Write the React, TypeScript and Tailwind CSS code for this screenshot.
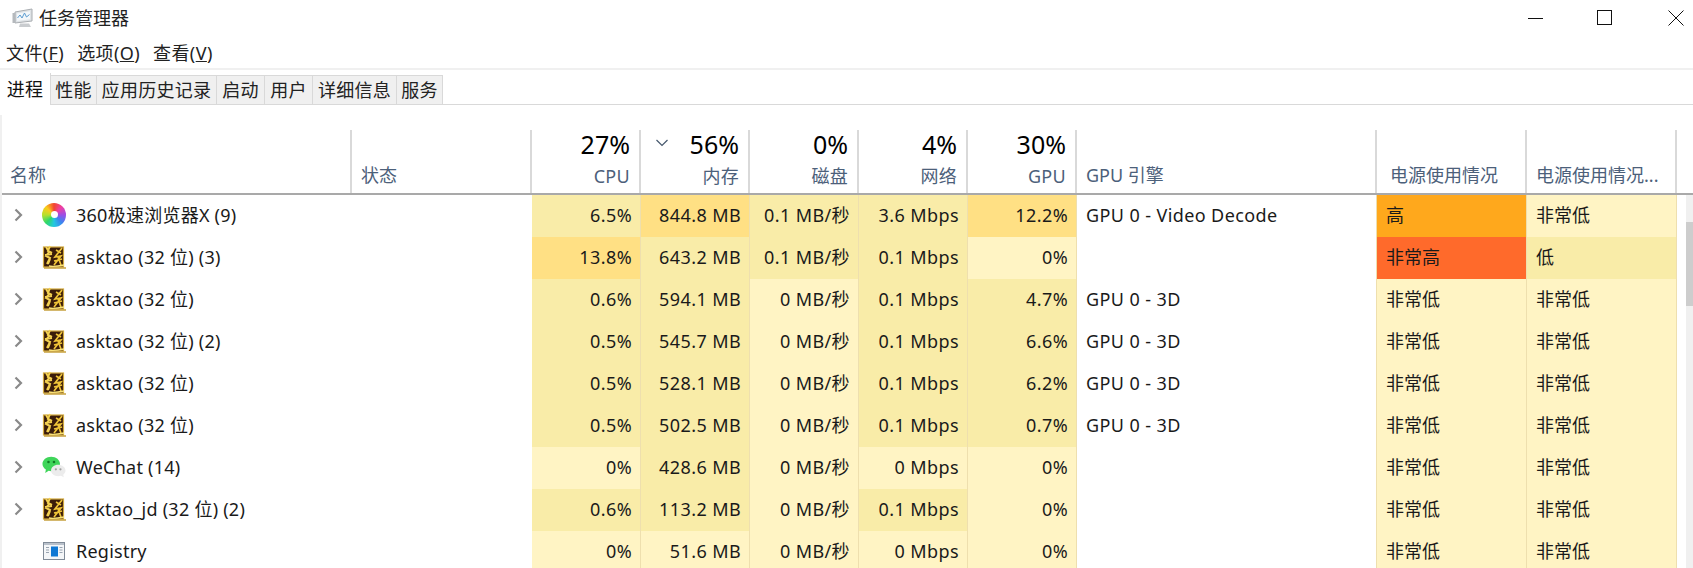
const FONT = "font-['Noto_Sans','Noto_Sans_CJK_SC',sans-serif]";

const L = "bg-[#fff4c4]";
const M = "bg-[#f9eca8]";
const S = "bg-[#ffe084]";
const H = "bg-[#ffa81c]";
const V = "bg-[#ff6a2b]";

type Cell = [string, string];
type Row = {
  icon: "360" | "tao" | "wechat" | "reg";
  name: string;
  arrow: boolean;
  cpu: Cell;
  mem: Cell;
  disk: Cell;
  net: Cell;
  gpu: Cell;
  engine: string;
  p1: Cell;
  p2: Cell;
};

const LOW = "非常低";

const rows: Row[] = [
  { icon: "360", name: "360极速浏览器X (9)", arrow: true, cpu: ["6.5%", M], mem: ["844.8 MB", S], disk: ["0.1 MB/秒", M], net: ["3.6 Mbps", M], gpu: ["12.2%", S], engine: "GPU 0 - Video Decode", p1: ["高", H], p2: [LOW, L] },
  { icon: "tao", name: "asktao (32 位) (3)", arrow: true, cpu: ["13.8%", S], mem: ["643.2 MB", M], disk: ["0.1 MB/秒", M], net: ["0.1 Mbps", M], gpu: ["0%", L], engine: "", p1: ["非常高", V], p2: ["低", M] },
  { icon: "tao", name: "asktao (32 位)", arrow: true, cpu: ["0.6%", M], mem: ["594.1 MB", M], disk: ["0 MB/秒", L], net: ["0.1 Mbps", M], gpu: ["4.7%", M], engine: "GPU 0 - 3D", p1: [LOW, L], p2: [LOW, L] },
  { icon: "tao", name: "asktao (32 位) (2)", arrow: true, cpu: ["0.5%", M], mem: ["545.7 MB", M], disk: ["0 MB/秒", L], net: ["0.1 Mbps", M], gpu: ["6.6%", M], engine: "GPU 0 - 3D", p1: [LOW, L], p2: [LOW, L] },
  { icon: "tao", name: "asktao (32 位)", arrow: true, cpu: ["0.5%", M], mem: ["528.1 MB", M], disk: ["0 MB/秒", L], net: ["0.1 Mbps", M], gpu: ["6.2%", M], engine: "GPU 0 - 3D", p1: [LOW, L], p2: [LOW, L] },
  { icon: "tao", name: "asktao (32 位)", arrow: true, cpu: ["0.5%", M], mem: ["502.5 MB", M], disk: ["0 MB/秒", L], net: ["0.1 Mbps", M], gpu: ["0.7%", M], engine: "GPU 0 - 3D", p1: [LOW, L], p2: [LOW, L] },
  { icon: "wechat", name: "WeChat (14)", arrow: true, cpu: ["0%", L], mem: ["428.6 MB", M], disk: ["0 MB/秒", L], net: ["0 Mbps", L], gpu: ["0%", L], engine: "", p1: [LOW, L], p2: [LOW, L] },
  { icon: "tao", name: "asktao_jd (32 位) (2)", arrow: true, cpu: ["0.6%", M], mem: ["113.2 MB", M], disk: ["0 MB/秒", L], net: ["0.1 Mbps", M], gpu: ["0%", L], engine: "", p1: [LOW, L], p2: [LOW, L] },
  { icon: "reg", name: "Registry", arrow: false, cpu: ["0%", L], mem: ["51.6 MB", L], disk: ["0 MB/秒", L], net: ["0 Mbps", L], gpu: ["0%", L], engine: "", p1: [LOW, L], p2: [LOW, L] },
];

function Icon({ kind }: { kind: Row["icon"] }) {
  if (kind === "360")
    return (
      <div className="relative w-[24px] h-[24px] rounded-full blur-[0.5px] bg-[conic-gradient(#f2452f,#ee3fa6,#9a4fe6,#3b86f0,#22c8e0,#2fd86a,#b6e02c,#fbcb1c,#f2452f)]">
        <div className="absolute left-[9px] top-[8px] w-[7px] h-[7px] rounded-full bg-white" />
      </div>
    );
  if (kind === "tao")
    return (
      <svg width="24" height="24" viewBox="0 0 24 24">
        <rect x="1.500" y="2" width="20" height="20" fill="#3a1c0a" stroke="#d2a93f" strokeWidth="1.200" />
        <path d="M2 23h22" stroke="#c29a30" strokeWidth="1.400" />
        <path d="M4 2l3 5-3 4 4 2-3 6M8 1L6 6l4 2M3 10l7-1M8 14l-2 5" stroke="#f3d050" strokeWidth="2" fill="none" />
        <path d="M20 3l-7 9 6-1-7 9M14 5l5 3M16 12l3 8M12 16l8-2" stroke="#f0c438" strokeWidth="1.700" fill="none" />
        <path d="M7 21c5 1 10 0 15-1" stroke="#f9e27a" strokeWidth="1.300" fill="none" />
      </svg>
    );
  if (kind === "wechat")
    return (
      <svg width="26" height="24" viewBox="0 0 26 24">
        <path d="M10 1c5.300 0 9.500 3.500 9.500 7.800S15.300 16.500 10 16.500c-1 0-2-.1-2.800-.4L3.500 18.500l.7-3.700C2 13.300.5 11.200.5 8.800.5 4.500 4.700 1 10 1z" fill="#3fd55a" />
        <path d="M17.500 9.500c4.300 0 8 2.800 8 6.300 0 1.800-1 3.400-2.500 4.500l.6 2.900-3.100-1.600c-.9.300-1.900.4-3 .4-4.300 0-7.700-2.700-7.700-6.200s3.400-6.300 7.700-6.300z" fill="#ececec" />
        <circle cx="7" cy="6.500" r="1.400" fill="#127a26" />
        <circle cx="13" cy="6.500" r="1.400" fill="#127a26" />
        <circle cx="15" cy="14.500" r="1.200" fill="#a2a2a2" />
        <circle cx="20" cy="14.500" r="1.200" fill="#a2a2a2" />
      </svg>
    );
  return (
    <svg width="24" height="24" viewBox="0 0 24 24">
      <rect x="1.500" y="3.500" width="21" height="17" fill="#f4f6f8" stroke="#808b98" />
      <rect x="2" y="4" width="20" height="2" fill="#b9c1cb" />
      <rect x="9" y="7.500" width="7" height="10" fill="#0f78d4" />
      <path d="M4 8.500h3M4 11h3M4 13.500h3M17.500 8.500h3M17.500 11h3M17.500 13.500h3" stroke="#98a3b0" />
    </svg>
  );
}

function HeaderStat({ w, pct, label, chevron }: { w: string; pct: string; label: string; chevron?: boolean }) {
  return (
    <div className={`${w} shrink-0 h-full relative flex flex-col items-end border-r-2 border-[#d9d9d9] pr-[9px]`}>
      {chevron && (
        <svg className="absolute left-[14px] top-[9px]" width="14" height="8" viewBox="0 0 14 8">
          <path d="M1.500 1l5.500 5.500L12.500 1" stroke="#46586d" strokeWidth="1.200" fill="none" />
        </svg>
      )}
      <div className="text-[25px] leading-[30px] text-black h-[30px] -mt-[1px]">{pct}</div>
      <div className="text-[18px] tracking-[0.3px] leading-[24px] mt-[5px] text-[#4c607a]">{label}</div>
    </div>
  );
}

function Num({ w, cell }: { w: string; cell: Cell }) {
  return (
    <div className={`${w} shrink-0 h-full ${cell[1]} border-r border-[#eedfae] flex items-center justify-end pr-[8px] pb-[2px] tracking-[0.4px]`}>
      {cell[0]}
    </div>
  );
}

function Txt({ w, cell }: { w: string; cell: Cell }) {
  return (
    <div className={`${w} shrink-0 h-full ${cell[1]} border-r border-[#eedfae] flex items-center pl-[9px] pb-[2px]`}>
      {cell[0]}
    </div>
  );
}

const headCls = "shrink-0 border-r-2 border-[#d9d9d9] flex items-end pb-[3px] text-[#4c607a] leading-[30px]";

const tabs: [string, string][] = [
  ["性能", "w-[46px]"],
  ["应用历史记录", "w-[120px]"],
  ["启动", "w-[48px]"],
  ["用户", "w-[48px]"],
  ["详细信息", "w-[84px]"],
  ["服务", "w-[46px]"],
];

export default function App() {
  return (
    <div className={`${FONT} w-[1693px] h-[568px] overflow-hidden bg-white text-[#1a1a1a] text-[18px] flex flex-col`}>
      {/* title bar */}
      <div className="h-[35px] shrink-0 flex items-center pl-[12px]">
        <svg width="22" height="22" viewBox="0 0 22 22">
          <path d="M3 5l17-3v12L3 16z" fill="#dfe3e6" stroke="#a9adb1" />
          <path d="M5 6.500l13-2.200v8L5 14z" fill="#f3f7fa" />
          <path d="M5.500 11l2.500-3 2 3 2.500-5 2 4 3-2.500" stroke="#5a9bd0" strokeWidth="1" fill="none" />
          <rect x="0.500" y="6" width="3" height="10" fill="#b5b9bd" />
          <path d="M8 16.500h9l2 3.500H7z" fill="#c9cccf" />
        </svg>
        <div className="ml-[5px] text-[18px] leading-[24px] text-[#222]">任务管理器</div>
        <div className="ml-auto flex h-full items-center">
          <div className="w-[46px] flex justify-center">
            <svg width="16" height="16" viewBox="0 0 16 16"><path d="M0 8.500h15" stroke="#111" /></svg>
          </div>
          <div className="w-[46px] ml-[23px] flex justify-center">
            <svg width="16" height="16" viewBox="0 0 16 16"><rect x=".5" y=".5" width="14" height="14" fill="none" stroke="#111" /></svg>
          </div>
          <div className="w-[34px] ml-[31px] flex justify-center">
            <svg width="16" height="16" viewBox="0 0 16 16"><path d="M.5.500l15 15M15.500.500l-15 15" stroke="#111" /></svg>
          </div>
        </div>
      </div>
      {/* menu */}
      <div className="h-[35px] pt-[4px] shrink-0 border-b-2 border-[#f0f0f0] flex items-center pl-[6px] gap-[13px] text-[18px] tracking-[0.4px] text-[#222]">
        <span>文件(<span className="underline">F</span>)</span>
        <span>选项(<span className="underline">O</span>)</span>
        <span>查看(<span className="underline">V</span>)</span>
      </div>
      {/* tabs */}
      <div className="h-[35px] shrink-0 flex items-end border-b border-[#d9d9d9] tracking-[0.3px]">
        <div className="w-[51px] h-[32px] bg-white border-r border-[#d9d9d9] flex items-center justify-center relative top-[1px] text-[#111]">进程</div>
        {tabs.map(([t, w]) => (
          <div key={t} className={`${w} shrink-0 h-[29px] bg-[#f0f0f0] border-r border-t border-[#d9d9d9] flex items-center justify-center text-[#222]`}>
            {t}
          </div>
        ))}
      </div>
      {/* list */}
      <div className="flex-1 flex flex-col min-h-0 border-l-2 border-[#f0f0f0] mt-[10px] relative">
        <div className="h-[15px] shrink-0" />
        <div className="h-[65px] shrink-0 flex border-b-2 border-[#a9a9a9] pr-[17px]">
          <div className={`${headCls} w-[350px] pl-[8px]`}>名称</div>
          <div className={`${headCls} w-[180px] pl-[9px]`}>状态</div>
          <HeaderStat w="w-[109px]" pct="27%" label="CPU" />
          <HeaderStat w="w-[109px]" pct="56%" label="内存" chevron />
          <HeaderStat w="w-[109px]" pct="0%" label="磁盘" />
          <HeaderStat w="w-[109px]" pct="4%" label="网络" />
          <HeaderStat w="w-[109px]" pct="30%" label="GPU" />
          <div className={`${headCls} w-[300px] pl-[9px]`}>GPU 引擎</div>
          <div className={`${headCls} w-[150px] pl-[13px]`}>电源使用情况</div>
          <div className={`${headCls} w-[150px] pl-[9px]`}>电源使用情况...</div>
        </div>
        {rows.map((r, i) => (
          <div key={i} className="h-[42px] shrink-0 flex items-center text-[#1a1a1a] pr-[17px]">
            <div className="w-[350px] shrink-0 flex items-center h-full pb-[2px]">
              <div className="w-[34px] shrink-0 flex justify-center">
                {r.arrow && (
                  <svg width="10" height="14" viewBox="0 0 10 14">
                    <path d="M1.500 1.500l5.500 5.500-5.500 5.500" stroke="#8a8a8a" strokeWidth="2.200" fill="none" />
                  </svg>
                )}
              </div>
              <div className="w-[24px] ml-[6px] shrink-0 flex justify-center"><Icon kind={r.icon} /></div>
              <div className="ml-[10px] whitespace-nowrap tracking-[0.25px]">{r.name}</div>
            </div>
            <div className="w-[180px] shrink-0" />
            <Num w="w-[109px]" cell={r.cpu} />
            <Num w="w-[109px]" cell={r.mem} />
            <Num w="w-[109px]" cell={r.disk} />
            <Num w="w-[109px]" cell={r.net} />
            <Num w="w-[109px]" cell={r.gpu} />
            <div className="w-[300px] shrink-0 h-full bg-white border-r border-[#eedfae] flex items-center pl-[9px] pb-[2px] tracking-[0.4px]">{r.engine}</div>
            <Txt w="w-[150px]" cell={r.p1} />
            <Txt w="w-[150px]" cell={r.p2} />
          </div>
        ))}
        {/* scrollbar */}
        <div className="absolute right-0 top-[80px] bottom-0 w-[7px] bg-[#f0f0f0]">
          <div className="mt-[27px] h-[84px] bg-[#cdcdcd]" />
        </div>
      </div>
    </div>
  );
}
